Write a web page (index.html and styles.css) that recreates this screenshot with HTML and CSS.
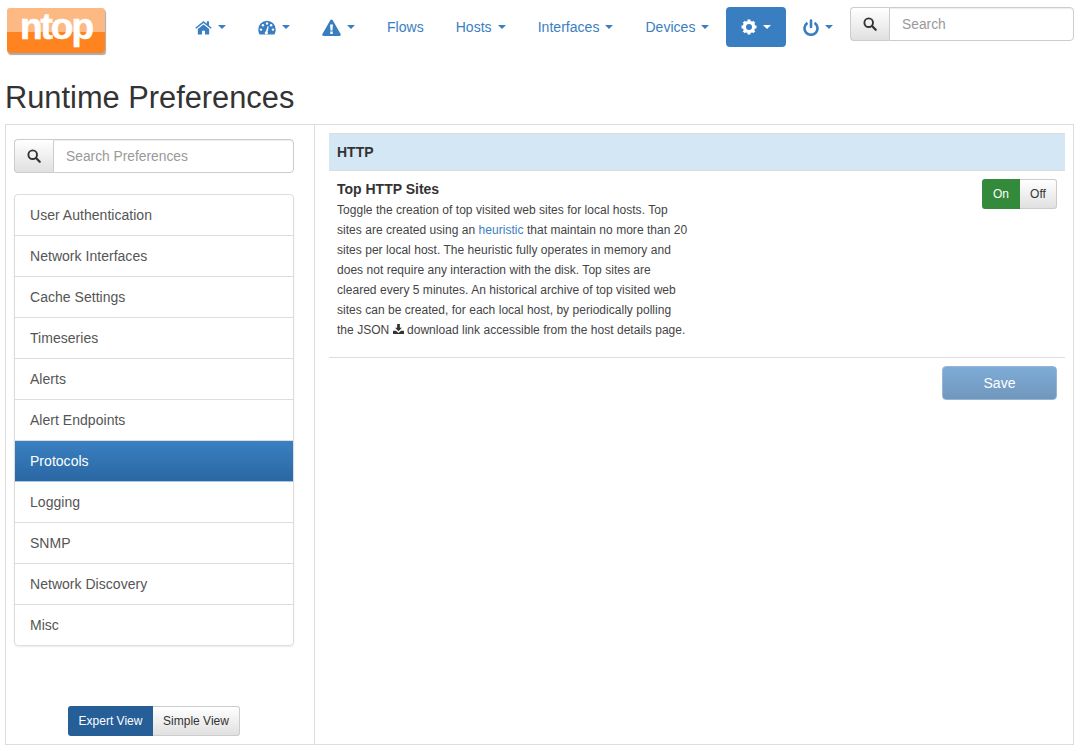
FILE: index.html
```html
<!DOCTYPE html>
<html lang="en">
<head>
    <meta charset="UTF-8">
    <title>Runtime Preferences</title>
    <link rel="stylesheet" href="styles.css">
</head>
<body>
    <header class="topbar">
        <a class="logo" href="#"><span class="logo-text">ntop</span></a>
        <ul class="nav">
            <li><a href="#">
                <svg class="ico ico-home" viewBox="0 0 18 15"><path d="M9 .6.3 7.700l1 1.200L9 2.700l7.700 6.200 1-1.200-2.900-2.400V.9h-2.300v2.500z"/><path d="M3 9.200 9 4.300l6 4.900V15h-4.400v-4H7.400v4H3z"/></svg>
                <span class="caret"></span></a></li>
            <li><a href="#">
                <svg class="ico ico-gauge" viewBox="0 0 18 15"><path d="M9 .8A8.700 8.700 0 0 0 .3 9.500c0 1.900.5 3.600 1.400 5h14.600c.9-1.400 1.400-3.100 1.400-5A8.700 8.700 0 0 0 9 .8z"/><g fill="#fff"><circle cx="3" cy="9.600" r="1.200"/><circle cx="4.900" cy="5.300" r="1.200"/><circle cx="9" cy="3.500" r="1.200"/><circle cx="13.100" cy="5.300" r="1.200"/><circle cx="15" cy="9.600" r="1.200"/><path d="m7.700 11.600 2.100-5.500.9.3-1.100 5.700a1.500 1.500 0 1 1-1.900-.5z"/></g></svg>
                <span class="caret"></span></a></li>
            <li><a href="#">
                <svg class="ico ico-warn" viewBox="0 0 19 17"><path d="M9.500.4c.5 0 .9.3 1.100.7l8 14c.5.8-.1 1.800-1.100 1.800h-16c-1 0-1.600-1-1.100-1.800l8-14c.2-.4.6-.7 1.100-.7z"/><path fill="#fff" d="M8.100 5.400h2.800l-.4 6.100H8.500zM8.300 12.600h2.400V15H8.300z"/></svg>
                <span class="caret"></span></a></li>
            <li><a href="#">Flows</a></li>
            <li><a href="#">Hosts <span class="caret"></span></a></li>
            <li><a href="#">Interfaces <span class="caret"></span></a></li>
            <li><a href="#">Devices <span class="caret"></span></a></li>
            <li class="active"><a href="#">
                <svg class="ico ico-gear" viewBox="0 0 16 16"><circle cx="8" cy="8" r="4.600" fill="none" stroke="#fff" stroke-width="3.200"/><g stroke="#fff" stroke-width="3"><path d="M8 .5v3M8 12.500v3M.5 8h3M12.500 8h3M2.700 2.700l2.100 2.100M11.200 11.200l2.100 2.100M2.700 13.300l2.100-2.100M11.200 4.800l2.100-2.100"/></g></svg>
                <span class="caret"></span></a></li>
            <li><a href="#">
                <svg class="ico ico-power" viewBox="0 0 16 17"><path fill="none" stroke="#3a7ec2" stroke-width="2.600" d="M4.500 3.800a6.500 6.500 0 1 0 7 0"/><path stroke="#3a7ec2" stroke-width="2.600" stroke-linecap="round" d="M8 1.500v6.500"/></svg>
                <span class="caret"></span></a></li>
        </ul>
        <form class="search search-top">
            <button type="button" class="search-btn"><svg class="ico-search" viewBox="0 0 14 14"><circle cx="5.700" cy="5.700" r="4.300" fill="none" stroke="#333" stroke-width="1.900"/><path stroke="#333" stroke-width="2.300" stroke-linecap="round" d="m9 9 3.700 3.700"/></svg></button>
            <input type="text" placeholder="Search">
        </form>
    </header>

    <h1>Runtime Preferences</h1>

    <div class="panel">
        <aside class="side">
            <form class="search">
                <button type="button" class="search-btn"><svg class="ico-search" viewBox="0 0 14 14"><circle cx="5.700" cy="5.700" r="4.300" fill="none" stroke="#333" stroke-width="1.900"/><path stroke="#333" stroke-width="2.300" stroke-linecap="round" d="m9 9 3.700 3.700"/></svg></button>
                <input type="text" placeholder="Search Preferences">
            </form>
            <div class="list">
                <a href="#">User Authentication</a>
                <a href="#">Network Interfaces</a>
                <a href="#">Cache Settings</a>
                <a href="#">Timeseries</a>
                <a href="#">Alerts</a>
                <a href="#">Alert Endpoints</a>
                <a href="#" class="active">Protocols</a>
                <a href="#">Logging</a>
                <a href="#">SNMP</a>
                <a href="#">Network Discovery</a>
                <a href="#">Misc</a>
            </div>
            <div class="views">
                <a href="#" class="view on">Expert View</a><a href="#" class="view">Simple View</a>
            </div>
        </aside>
        <main class="content">
            <div class="section-head">HTTP</div>
            <div class="pref">
                <div class="pref-text">
                    <strong>Top HTTP Sites</strong>
                    <p>Toggle the creation of top visited web sites for local hosts. Top sites are created using an <a href="#">heuristic</a> that maintain no more than 20 sites per local host. The heuristic fully operates in memory and does not require any interaction with the disk. Top sites are cleared every 5 minutes. An historical archive of top visited web sites can be created, for each local host, by periodically polling the JSON <svg class="ico-dl" viewBox="0 0 12 11"><path d="M4.500 0h3v4h2.300L6 8 2.200 4h2.300z"/><path d="M0 7.500h3.200L6 9.800l2.800-2.300H12V11H0z"/></svg> download link accessible from the host details page.</p>
                </div>
                <div class="toggle">
                    <span class="tog on">On</span><span class="tog">Off</span>
                </div>
            </div>
            <div class="actions">
                <button type="button" class="save">Save</button>
            </div>
        </main>
    </div>
</body>
</html>
```

FILE: styles.css
```css
* {
    box-sizing: border-box;
}
body {
    margin: 0;
    font-family: "Liberation Sans", Arial, sans-serif;
    font-size: 14px;
    line-height: 20px;
    color: #333;
    background: #fff;
}
a {
    color: #3a7ec2;
    text-decoration: none;
}

/* top bar */
.topbar {
    display: flex;
    align-items: flex-start;
    height: 62px;
    padding: 7px 9px 0 7px;
}
.logo {
    display: block;
    width: 98px;
    height: 45px;
    margin-top: 1px;
    border-radius: 3px;
    background: linear-gradient(#fdb983 0, #fdb983 53%, #ff8420 53%, #ff8420 100%);
    box-shadow: 1px 2px 1px #aaa;
    text-align: center;
}
.logo-text {
    display: block;
    color: #fff;
    font-size: 37px;
    font-weight: 700;
    line-height: 38px;
    letter-spacing: -2px;
    -webkit-text-stroke: .6px #fff;
}
.nav {
    display: flex;
    gap: 2px;
    list-style: none;
    margin: 0 0 0 75px;
    padding: 0;
    letter-spacing: .03px;
}
.nav a {
    display: flex;
    align-items: center;
    gap: 6px;
    height: 40px;
    padding: 0 15px;
    border-radius: 4px;
}
.nav .active a {
    background: #3a7ec2;
    color: #fff;
}
.caret {
    display: inline-block;
    width: 0;
    height: 0;
    border-top: 4px solid currentColor;
    border-left: 4px solid transparent;
    border-right: 4px solid transparent;
}
.ico {
    display: block;
    fill: currentColor;
}
.ico-home { width: 17px; height: 15px; }
.ico-gauge { width: 18px; height: 15px; }
.ico-warn { width: 19px; height: 17px; }
.ico-gear { width: 16px; height: 16px; }
.ico-power { width: 16px; height: 17px; }

/* search groups */
.search {
    display: flex;
    height: 34px;
}
.search-top {
    width: 224px;
    margin-left: auto;
}
.search-btn {
    width: 39px;
    padding: 0;
    border: 1px solid #ccc;
    border-right: 0;
    border-radius: 4px 0 0 4px;
    background: linear-gradient(#fff, #e0e0e0);
}
.ico-search {
    display: block;
    width: 14px;
    height: 14px;
    margin: 0 auto;
}
.search input {
    flex: 1;
    min-width: 0;
    padding: 7px 12px 5px;
    border: 1px solid #ccc;
    border-radius: 0 4px 4px 0;
    box-shadow: inset 0 1px 1px rgba(0, 0, 0, .075);
    font: inherit;
    font-size: 13.800px;
    color: #555;
}
.search input::placeholder {
    color: #999;
}

h1 {
    margin: 0 0 0 5px;
    height: 62px;
    font-size: 30.800px;
    font-weight: 500;
    line-height: 72px;
    color: #333;
}

/* main panel */
.panel {
    display: flex;
    height: 621px;
    margin: 0 9px 0 5px;
    border: 1px solid #ddd;
}
.side {
    display: flex;
    flex-direction: column;
    width: 309px;
    padding: 14px 20px 8px 8px;
    border-right: 1px solid #ddd;
}
.list {
    display: flex;
    flex-direction: column;
    margin-top: 21px;
    border-radius: 4px;
    box-shadow: 0 1px 2px rgba(0, 0, 0, .075);
}
.list a {
    display: block;
    height: 42px;
    margin-bottom: -1px;
    padding: 10px 15px;
    border: 1px solid #ddd;
    color: #555;
    letter-spacing: .03px;
}
.list a:first-child {
    border-radius: 4px 4px 0 0;
}
.list a:last-child {
    margin-bottom: 0;
    border-radius: 0 0 4px 4px;
}
.list a.active {
    position: relative;
    border-color: #ddd #ddd #a9c8e3;
    background: linear-gradient(#3a80c2, #2a67a3);
    background-clip: padding-box;
    color: #fff;
}
.views {
    display: flex;
    justify-content: center;
    margin-top: auto;
}
.view {
    width: 87px;
    height: 30px;
    border: 1px solid #ccc;
    border-left: 0;
    border-radius: 0 3px 3px 0;
    background: linear-gradient(#fff, #e0e0e0);
    color: #333;
    font-size: 12px;
    line-height: 28px;
    text-align: center;
}
.view.on {
    width: 85px;
    border: 0;
    border-radius: 3px 0 0 3px;
    background: #265e97;
    color: #fff;
    line-height: 30px;
}

/* right side */
.content {
    flex: 1;
    padding: 8px 8px 0 14px;
}
.section-head {
    height: 38px;
    padding: 0 8px;
    border-top: 1px solid #ddd;
    border-bottom: 1px solid #ddd;
    background: #d3e7f4;
    font-weight: 700;
    line-height: 36px;
}
.pref {
    display: flex;
    justify-content: space-between;
    align-items: flex-start;
    height: 187px;
    padding: 8px;
    border-bottom: 1px solid #ddd;
}
.pref-text {
    width: 352px;
}
.pref-text strong {
    display: block;
}
.pref-text p {
    margin: 1px 0 0;
    font-size: 12px;
    letter-spacing: .03px;
    line-height: 20px;
    color: #444;
}
.ico-dl {
    display: inline-block;
    width: 11px;
    height: 10px;
    fill: #333;
}
.toggle {
    display: flex;
    height: 30px;
}
.tog {
    width: 37px;
    border: 1px solid #ccc;
    border-left: 0;
    border-radius: 0 3px 3px 0;
    background: linear-gradient(#fff, #e0e0e0);
    font-size: 12px;
    line-height: 28px;
    text-align: center;
}
.tog.on {
    width: 38px;
    border: 0;
    border-radius: 3px 0 0 3px;
    background: #338a3a;
    color: #fff;
    line-height: 30px;
}
.actions {
    display: flex;
    justify-content: flex-end;
    padding: 8px 8px 0;
}
.save {
    width: 115px;
    height: 34px;
    border: 1px solid #5a8fc4;
    border-radius: 4px;
    background: linear-gradient(#3a80c2, #26609a);
    color: #fff;
    font: inherit;
    opacity: .65;
}
```
